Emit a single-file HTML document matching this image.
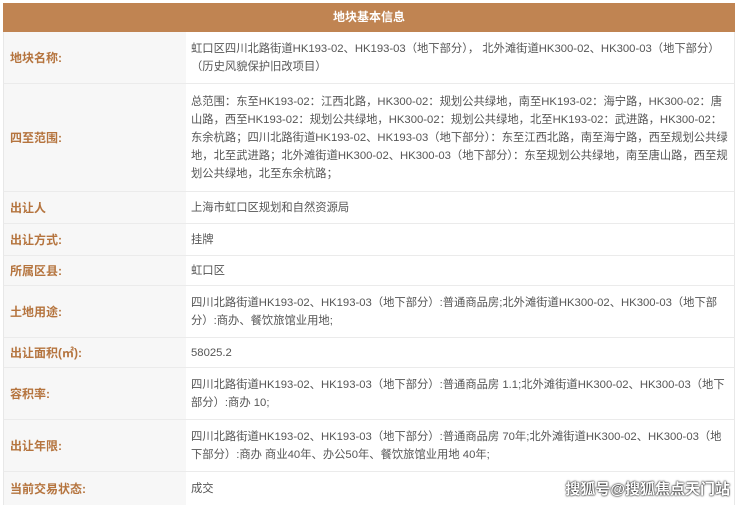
<html><head><style>
body{margin:0;width:740px;height:505px;background:#fff;position:relative;overflow:hidden;font-family:"Liberation Sans","Noto Sans CJK SC",sans-serif}
.h{position:absolute;left:3px;top:3px;width:732px;height:29px;background:#c08452;color:#fff;font-size:12px;font-weight:bold;text-align:center;line-height:29px}
.r{position:absolute;left:3px;width:732px;border-bottom:1px solid #ebebeb;border-left:1px solid #e8e8e8;border-right:1px solid #e8e8e8;box-sizing:border-box}
.l{position:absolute;left:0;top:0;bottom:0;width:182px;background:#f7f7f7;color:#b5743e;font-size:12px;font-weight:bold;display:flex;align-items:center;padding-left:6px;box-sizing:border-box}
.v{position:absolute;left:187px;right:0;top:0;bottom:0;color:#555;font-size:11.3px;line-height:18px;display:flex;align-items:center;white-space:nowrap;overflow:hidden}
.wm{position:absolute;right:10px;bottom:6px;color:#fff;font-size:15px;font-weight:bold;text-shadow:0 0 2px #000,0 0 1px #000}
</style></head><body>
<div class="h">地块基本信息</div>
<div class="r" style="top:32px;height:52px"><div class="l">地块名称:</div><div class="v"><div>虹口区四川北路街道HK193-02、HK193-03（地下部分），&nbsp;北外滩街道HK300-02、HK300-03（地下部分）<br>（历史风貌保护旧改项目）</div></div></div>
<div class="r" style="top:84px;height:108px"><div class="l">四至范围:</div><div class="v"><div>总范围：东至HK193-02：江西北路，HK300-02：规划公共绿地，南至HK193-02：海宁路，HK300-02：唐<br>山路，西至HK193-02：规划公共绿地，HK300-02：规划公共绿地，北至HK193-02：武进路，HK300-02：<br>东余杭路；四川北路街道HK193-02、HK193-03（地下部分）：东至江西北路，南至海宁路，西至规划公共绿<br>地，北至武进路；北外滩街道HK300-02、HK300-03（地下部分）：东至规划公共绿地，南至唐山路，西至规<br>划公共绿地，北至东余杭路；</div></div></div>
<div class="r" style="top:192px;height:32px"><div class="l">出让人</div><div class="v">上海市虹口区规划和自然资源局</div></div>
<div class="r" style="top:224px;height:32px"><div class="l">出让方式:</div><div class="v">挂牌</div></div>
<div class="r" style="top:256px;height:30px"><div class="l">所属区县:</div><div class="v">虹口区</div></div>
<div class="r" style="top:286px;height:52px"><div class="l">土地用途:</div><div class="v"><div>四川北路街道HK193-02、HK193-03（地下部分）:普通商品房;北外滩街道HK300-02、HK300-03（地下部<br>分）:商办、餐饮旅馆业用地;</div></div></div>
<div class="r" style="top:338px;height:30px"><div class="l">出让面积(㎡):</div><div class="v">58025.2</div></div>
<div class="r" style="top:368px;height:52px"><div class="l">容积率:</div><div class="v"><div>四川北路街道HK193-02、HK193-03（地下部分）:普通商品房 1.1;北外滩街道HK300-02、HK300-03（地下<br>部分）:商办 10;</div></div></div>
<div class="r" style="top:420px;height:52px"><div class="l">出让年限:</div><div class="v"><div>四川北路街道HK193-02、HK193-03（地下部分）:普通商品房 70年;北外滩街道HK300-02、HK300-03（地<br>下部分）:商办 商业40年、办公50年、餐饮旅馆业用地 40年;</div></div></div>
<div class="r" style="top:472px;height:33px;border-bottom:none"><div class="l">当前交易状态:</div><div class="v">成交</div></div>
<div class="wm">搜狐号@搜狐焦点天门站</div>
</body></html>
